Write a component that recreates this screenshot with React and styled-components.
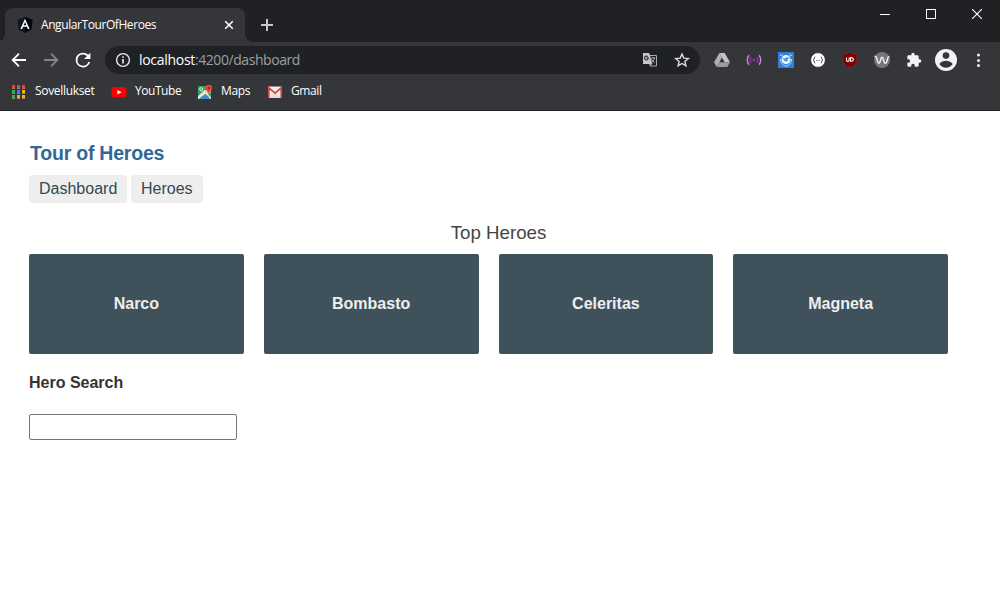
import React from "react";
import styled, { createGlobalStyle } from "styled-components";

const GlobalStyle = createGlobalStyle`
  * { box-sizing: border-box; }
  html, body { margin: 0; background: #fff; overflow: hidden; }
  body { font-family: "Liberation Sans", Arial, sans-serif; }
  svg { display: block; flex: none; }
`;

const Window = styled.div`
  width: 1000px;
  height: 613px;
  display: flex;
  flex-direction: column;
`;

const Chrome = styled.header`
  height: 111px;
  background: #35363a;
  border-bottom: 1px solid #202124;
  font-family: "Open Sans", "Noto Sans", sans-serif;
  color: #fff;
`;

const TitleBar = styled.div`
  height: 42px;
  display: flex;
  background: #202124;
  padding-left: 5px;
`;

const Tab = styled.div`
  position: relative;
  width: 240px;
  height: 34px;
  margin-top: 8px;
  padding: 0 10px 0 12px;
  display: flex;
  align-items: center;
  background: #35363a;
  border-radius: 8px 8px 0 0;

  &::before,
  &::after {
    content: "";
    position: absolute;
    bottom: 0;
    width: 8px;
    height: 8px;
  }
  &::before {
    left: -8px;
    background: radial-gradient(circle at 0 0, transparent 7.5px, #35363a 8px);
  }
  &::after {
    right: -8px;
    background: radial-gradient(circle at 100% 0, transparent 7.5px, #35363a 8px);
  }
`;

const TabTitle = styled.span`
  flex: 1;
  margin-left: 8px;
  padding-bottom: 2px;
  font-size: 12px;
  letter-spacing: ${(p) => p.$tracking}px;
  white-space: nowrap;
`;

const NewTab = styled.div`
  padding: 19px 0 0 16px;
  flex: 1;
`;

const WindowButtons = styled.div`
  display: flex;
  height: 28px;
`;

const WindowButton = styled.div`
  width: 46px;
  display: grid;
  place-items: center;
`;

const Toolbar = styled.div`
  height: 36px;
  display: flex;
  align-items: center;
  padding-left: 3px;
`;

const IconSlot = styled.div`
  width: 32px;
  height: 32px;
  display: grid;
  place-items: center;
`;

const AddressBar = styled.div`
  width: 595px;
  height: 28px;
  margin: 0 6px;
  padding: 0 2px 0 10px;
  display: flex;
  align-items: center;
  border-radius: 14px;
  background: #202124;
`;

const Address = styled.span`
  flex: 1;
  margin-left: 8px;
  font-size: 14px;
  line-height: 20px;
  letter-spacing: -0.43px;
  color: #9aa0a6;
`;

const Host = styled.span`
  color: #fff;
  letter-spacing: -0.3px;
`;

const Bookmarks = styled.nav`
  height: 28px;
  display: flex;
  align-items: center;
  padding-left: 11px;
`;

const Bookmark = styled.div`
  width: ${(p) => p.$width}px;
  display: flex;
  align-items: center;
  gap: 8px;
`;

const BookmarkLabel = styled.span`
  padding-bottom: 2px;
  font-size: 12px;
  line-height: 16px;
  letter-spacing: ${(p) => p.$tracking}px;
`;

const Page = styled.main`
  flex: 1;
  padding: 31px 52px 0 29px;
  display: flex;
  flex-direction: column;
  background: #fff;
`;

const Title = styled.h1`
  margin: 0 0 10px 1px;
  font-size: 19.5px;
  line-height: 23px;
  letter-spacing: -0.22px;
  color: #336699;
`;

const Links = styled.div`
  display: flex;
  gap: 4px;
`;

const PageLink = styled.a`
  width: ${(p) => p.$width}px;
  height: 28px;
  padding-left: 10px;
  border-radius: 4px;
  background: #eee;
  color: #334953;
  font-size: 16px;
  line-height: 27px;
`;

const Heading = styled.h2`
  margin: 18px 0 10px;
  padding-left: 20px;
  text-align: center;
  font-size: 18.72px;
  font-weight: 400;
  line-height: 23px;
  color: #444;
`;

const Grid = styled.section`
  display: grid;
  grid-template-columns: repeat(4, 1fr);
  gap: 20px;
`;

const Hero = styled.div`
  height: 100px;
  display: grid;
  place-items: center;
  border-radius: 2px;
  background: #3f525c;
  color: #eee;
  font-size: 16px;
  font-weight: 700;
`;

const SearchTitle = styled.h4`
  margin: 19px 0 22px;
  font-size: 16px;
  line-height: 19px;
  color: #333;
`;

const SearchBox = styled.input`
  width: 208px;
  height: 26px;
  padding: 1px 4px;
  border: 1px solid #767676;
  border-radius: 2px;
  background: #fff;
  font-size: 16px;
  outline: none;
`;

const Angular = () => (
  <svg width="16" height="16" viewBox="0 0 16 16">
    <path d="M8 0l7.5 2.7-1.2 9.8L8 16l-6.3-3.5L.5 2.7z" fill="#111722" />
    <path d="M8 0l7.5 2.7-1.2 9.8L8 16z" fill="#02050b" />
    <path fillRule="evenodd" d="M8 1.8L3.4 12.1h1.8l.9-2.3h3.8l.9 2.3h1.8zM8 5l1.3 3.3H6.7z" fill="#fff" />
  </svg>
);

const Back = ({ flip, color }) => (
  <svg width="16" height="16" viewBox="0 0 16 16" fill="none" stroke={color} strokeWidth="1.8">
    <path d={flip ? "M1 8h13M8 1.7L14.300 8 8 14.300" : "M15 8H2M8 1.700L1.700 8 8 14.300"} />
  </svg>
);

const Reload = () => (
  <svg width="24" height="24" viewBox="0 0 24 24">
    <path transform="translate(1 1) scale(.92)" fill="#fff" d="M17.65 6.35A7.96 7.96 0 0 0 12 4a8 8 0 1 0 7.73 10h-2.08A6 6 0 1 1 12 6c1.66 0 3.14.69 4.22 1.78L13 11h7V4z" />
  </svg>
);

const Info = () => (
  <svg width="16" height="16" viewBox="0 0 16 16">
    <circle cx="8" cy="8" r="6.4" fill="none" stroke="#e8eaed" strokeWidth="1.4" />
    <path d="M7.2 7h1.6v4.5H7.2zM7.2 4.2h1.6v1.6H7.2z" fill="#e8eaed" />
  </svg>
);

const Translate = () => (
  <svg width="16" height="16" viewBox="0 0 16 16">
    <path d="M7 3.5h7.500v10.500H8.500" fill="none" stroke="#a6a9ad" />
    <path d="M1 1h6.200l3.200 11H1z" fill="#c4c6c9" />
    <path d="M6.700 5.900H4.500M6.300 6.100A1.900 1.900 0 1 1 5.800 4.700" fill="none" stroke="#35363a" strokeWidth="1.100" />
    <path d="M8.800 6h4.600M11.100 5v1M12.500 6c-.4 1.800-1.300 3.200-2.400 4.200M9.500 7.300c.6 1.200 1.700 2.200 3.200 3.200" fill="none" stroke="#a6a9ad" />
    <path d="M7 12l1 2.800 2.200-2.800z" fill="#999da2" />
  </svg>
);

const Star = () => (
  <svg width="16" height="16" viewBox="0 0 16 16">
    <path d="M8 2l1.8 4.1 4.5.4-3.400 3 1 4.400L8 11.500l-3.900 2.400 1-4.400-3.400-3 4.500-.4z" fill="none" stroke="#dadce0" strokeWidth="1.400" />
  </svg>
);

const Drive = () => (
  <svg width="16" height="16" viewBox="0 0 16 16">
    <path d="M5.400 1L8 5.500 2.800 15 0 10.300z" fill="#b0b0b0" />
    <path d="M5.400 1h5.200L16 10.300h-5.300z" fill="#c4c4c4" />
    <path d="M5.400 10.300H16L13.300 15H2.800z" fill="#9c9c9c" />
  </svg>
);

const Broadcast = () => (
  <svg width="16" height="16" viewBox="0 0 16 16" fill="none" strokeWidth="1.400">
    <circle cx="8" cy="8" r="1.500" fill="#a81cc0" />
    <path d="M5.300 5.300c-1.300 1.500-1.300 3.900 0 5.400M10.700 5.300c1.300 1.500 1.300 3.900 0 5.400" stroke="#9c27b0" />
    <path d="M3 3.300c-2.300 2.600-2.300 6.800 0 9.400M13 3.300c2.300 2.600 2.300 6.800 0 9.400" stroke="#c58ad0" />
  </svg>
);

const BlueShield = () => (
  <svg width="16" height="16" viewBox="0 0 16 16">
    <rect width="16" height="16" fill="#2f80d8" />
    <path d="M2 3.500L5 2.800M14 3.500l-3-.7M2.300 7c.2 4 2 6 5.700 7.300 3.700-1.300 5.500-3.300 5.700-7.300" fill="none" stroke="#b5d6f6" strokeWidth="1" />
    <circle cx="8" cy="7.600" r="4.600" fill="#eef6fd" />
    <path d="M4.500 5.600L7 8.700M8 6h4" stroke="#2f80d8" strokeWidth=".9" />
    <circle cx="8" cy="7.600" r="1.900" fill="#2f80d8" />
    <circle cx="8" cy="7.600" r=".7" fill="#d7eafb" />
  </svg>
);

const Braces = () => (
  <svg width="16" height="16" viewBox="0 0 16 16">
    <circle cx="8" cy="8" r="7.400" fill="#fff" stroke="#202124" strokeWidth=".8" />
    <path d="M5.200 4.800C3.800 4.800 4.800 7.700 3.200 8c1.600.3.6 3.200 2 3.200M10.800 4.800c1.400 0 .4 2.900 2 3.200-1.600.3-.6 3.200-2 3.200" fill="none" stroke="#333" />
    <path d="M6 8.500h.8M7.600 8.500h.8M9.200 8.500h.8" stroke="#666" />
  </svg>
);

const Shield = () => (
  <svg width="16" height="16" viewBox="0 0 16 16">
    <path d="M8 .3c2 1.200 4.200 1.700 6.800 1.700v6c0 4-3 6-6.800 7.700C4.200 14 1.200 12 1.200 8V2C3.800 2 6 1.500 8 .3z" fill="#800000" stroke="#7b3a3c" strokeWidth=".5" />
    <path d="M4.500 5.500v2.700c0 1.500 2.600 1.500 2.600 0V5.500M8.500 5.600v3.700c3.900.3 3.900-3.800 0-3.700z" fill="none" stroke="#fff" strokeWidth="1.100" />
  </svg>
);

const Wave = () => (
  <svg width="16" height="16" viewBox="0 0 16 16">
    <circle cx="8" cy="8" r="8" fill="#777" />
    <path d="M.5 4.500c1.700-.5 2 .8 2.500 2.800 1 4.800 2.500 5 3.500.9.900-3.900 2.100-3.900 3.100 0 1 4.500 2.700 4 3.700-.6.4-1.900.8-2.900 2-3.100" fill="none" stroke="#eee" strokeWidth="1.500" />
  </svg>
);

const Puzzle = () => (
  <svg width="16" height="16" viewBox="0 0 24 24">
    <path fill="#f1f3f4" d="M20.500 11H19V7c0-1.100-.9-2-2-2h-4V3.500a2.500 2.500 0 0 0-5 0V5H4c-1.100 0-2 .9-2 2v3.800h1.500a2.700 2.700 0 0 1 0 5.400H2V20c0 1.100.9 2 2 2h3.800v-1.500a2.700 2.700 0 0 1 5.400 0V22H17c1.100 0 2-.9 2-2v-4h1.500a2.500 2.500 0 0 0 0-5z" />
  </svg>
);

const Avatar = () => (
  <svg width="22" height="22" viewBox="0 0 22 22">
    <circle cx="11" cy="11" r="11" fill="#f1f3f4" />
    <circle cx="11" cy="6.600" r="3.300" fill="#35363a" />
    <path d="M4.300 15c1.500-2.400 4.500-3.200 6.700-3.200s5.200.8 6.700 3.200c-1.500 2.400-4 3.800-6.700 3.800S5.800 17.400 4.300 15z" fill="#35363a" />
  </svg>
);

const Dots = () => (
  <svg width="4" height="14" viewBox="0 0 4 14" fill="#f1f3f4">
    <circle cx="2.500" cy="2" r="1.500" />
    <circle cx="2.500" cy="7.500" r="1.500" />
    <circle cx="2.500" cy="12.500" r="1.500" />
  </svg>
);

const appColors = ["#f63e30", "#f63e30", "#f63e30", "#34a853", "#2684f5", "#fbaf08", "#34a853", "#fbaf08", "#fbaf08"];

const Apps = () => (
  <svg width="16" height="16" viewBox="0 0 16 16">
    {appColors.map((c, i) => {
      const x = 1 + (i % 3) * 5;
      const y = 1 + Math.floor(i / 3) * 5;
      return (
        <g key={i}>
          <rect x={x} y={y} width="3" height="3" fill={c} />
          <rect x={x} y={y + 3} width="3" height="1" fill="#8d8078" />
        </g>
      );
    })}
  </svg>
);

const YouTube = () => (
  <svg width="16" height="16" viewBox="0 0 16 16">
    <rect x=".5" y="3" width="15" height="10.500" rx="2.400" fill="#f00" />
    <path d="M6.400 6l4.200 2.200-4.200 2.300z" fill="#fff" />
  </svg>
);

const Maps = () => (
  <svg width="16" height="16" viewBox="0 0 16 16">
    <rect x="1" y="2" width="13" height="13" rx="1" fill="#34a466" />
    <path d="M1 14L12.600 2.700 14 5v3L6 15H4.500l4-4.200z" fill="#f1d45b" />
    <path d="M8.500 7.800L14 13.300V15h-1.800L7 9.700z" fill="#e4e5e6" />
    <path d="M1 12.200l6.700-6.500L9.500 7.600 2 15H1z" fill="#e6e7e8" />
    <path d="M3.500 14.700l5-5 5 5z" fill="#4285f4" />
    <circle cx="4.200" cy="5.200" r="1.500" fill="none" stroke="#e8f5ee" strokeWidth=".9" />
    <path d="M11.800 10.500C11.400 7.500 8.700 6.600 8.700 4a3.200 3.200 0 0 1 6.400 0c0 2.600-2.800 3.500-3.300 6.500z" fill="#ea4335" />
    <circle cx="11.900" cy="4" r="1.200" fill="#922b24" />
  </svg>
);

const Gmail = () => (
  <svg width="16" height="16" viewBox="0 0 16 16">
    <rect x="1" y="2.500" width="14" height="11.500" rx="1" fill="#eee" />
    <path d="M2.800 13.800L8 8.300l5.200 5.500" fill="#ddd" />
    <path d="M1.800 14V3.800L8 9.200l6.200-5.400V14" fill="none" stroke="#d5453c" strokeWidth="1.700" />
  </svg>
);

const extensions = [Drive, Broadcast, BlueShield, Braces, Shield, Wave, Puzzle, Avatar, Dots];

const bookmarks = [
  { label: "Sovellukset", Icon: Apps, width: 100, tracking: -0.32 },
  { label: "YouTube", Icon: YouTube, width: 86, tracking: -0.45 },
  { label: "Maps", Icon: Maps, width: 70, tracking: -0.35 },
  { label: "Gmail", Icon: Gmail, width: 60, tracking: -0.4 },
];

const heroes = ["Narco", "Bombasto", "Celeritas", "Magneta"];

export default function App() {
  return (
    <Window>
      <GlobalStyle />
      <Chrome>
        <TitleBar>
          <Tab>
            <Angular />
            <TabTitle $tracking={-0.42}>AngularTourOfHeroes</TabTitle>
            <svg width="12" height="12" viewBox="0 0 12 12" stroke="#fff" strokeWidth="1.600">
              <path d="M2.200 2.200l7.600 7.600M9.800 2.200L2.200 9.800" />
            </svg>
          </Tab>
          <NewTab>
            <svg width="12" height="12" viewBox="0 0 12 12" fill="#c6c8cb">
              <path d="M5 0h2v5h5v2H7v5H5V7H0V5h5z" />
            </svg>
          </NewTab>
          <WindowButtons>
            <WindowButton>
              <svg width="10" height="10" viewBox="0 0 10 10"><path d="M0 5h10v1H0z" fill="#fff" /></svg>
            </WindowButton>
            <WindowButton>
              <svg width="10" height="10" viewBox="0 0 10 10"><rect x=".5" y=".5" width="9" height="9" fill="none" stroke="#fff" /></svg>
            </WindowButton>
            <WindowButton>
              <svg width="10" height="10" viewBox="0 0 10 10"><path d="M0 0l10 10M10 0L0 10" stroke="#fff" strokeWidth="1.100" /></svg>
            </WindowButton>
          </WindowButtons>
        </TitleBar>
        <Toolbar>
          <IconSlot><Back color="#fff" /></IconSlot>
          <IconSlot><Back flip color="#85868a" /></IconSlot>
          <IconSlot><Reload /></IconSlot>
          <AddressBar>
            <Info />
            <Address><Host>localhost</Host>:4200/dashboard</Address>
            <IconSlot><Translate /></IconSlot>
            <IconSlot><Star /></IconSlot>
          </AddressBar>
          {extensions.map((Icon, i) => (
            <IconSlot key={i}><Icon /></IconSlot>
          ))}
        </Toolbar>
        <Bookmarks>
          {bookmarks.map(({ label, Icon, width, tracking }) => (
            <Bookmark key={label} $width={width}>
              <Icon />
              <BookmarkLabel $tracking={tracking}>{label}</BookmarkLabel>
            </Bookmark>
          ))}
        </Bookmarks>
      </Chrome>
      <Page>
        <Title>Tour of Heroes</Title>
        <Links>
          <PageLink $width={98}>Dashboard</PageLink>
          <PageLink $width={72}>Heroes</PageLink>
        </Links>
        <Heading>Top Heroes</Heading>
        <Grid>
          {heroes.map((name) => <Hero key={name}>{name}</Hero>)}
        </Grid>
        <SearchTitle>Hero Search</SearchTitle>
        <SearchBox aria-label="Hero Search" />
      </Page>
    </Window>
  );
}
